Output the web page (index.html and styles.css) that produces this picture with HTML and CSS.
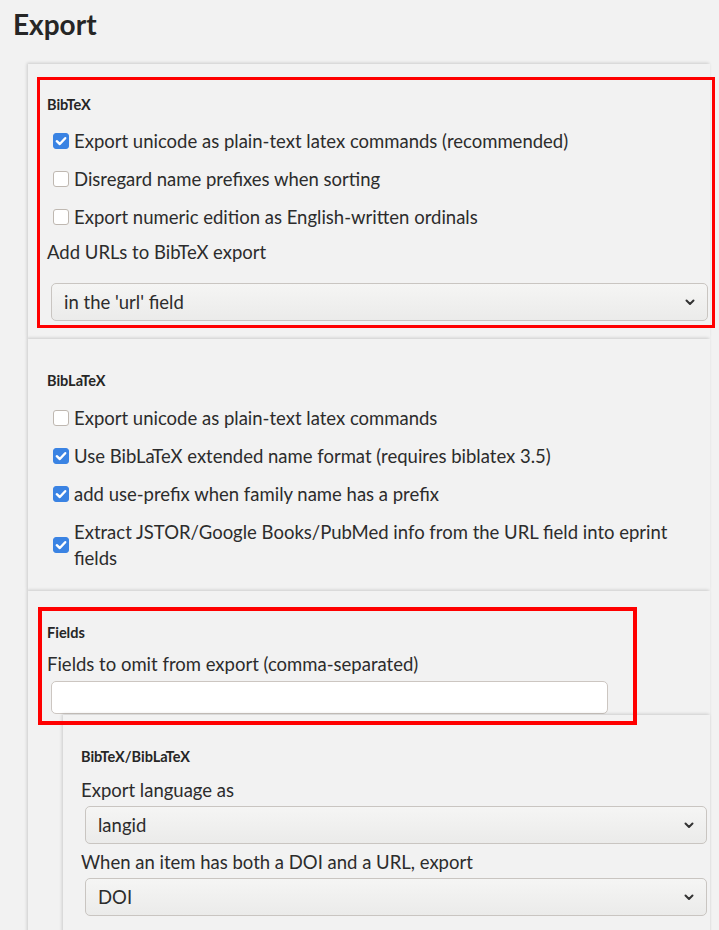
FILE: index.html
```html
<!DOCTYPE html>
<html>
<head>
<meta charset="utf-8">
<link rel="stylesheet" href="styles.css">
</head>
<body>
<h1 class="title">Export</h1>
<div class="groups">
  <div class="section s1">
    <div class="caption">BibTeX</div>
    <div class="row"><span class="cb on"><svg viewBox="0 0 16 16"><path d="M3.8 8.2 L6.8 11 L12.2 5.2"/></svg></span><span class="lbl">Export unicode as plain-text latex commands (recommended)</span></div>
    <div class="row"><span class="cb"></span><span class="lbl">Disregard name prefixes when sorting</span></div>
    <div class="row"><span class="cb"></span><span class="lbl">Export numeric edition as English-written ordinals</span></div>
    <div class="label urls">Add URLs to BibTeX export</div>
    <div class="select big"><span>in the 'url' field</span><svg class="chev" viewBox="0 0 10 7"><path d="M1.5 1.5 L5 5 L8.5 1.5"/></svg></div>
  </div>
  <div class="section s2">
    <div class="caption">BibLaTeX</div>
    <div class="row"><span class="cb"></span><span class="lbl">Export unicode as plain-text latex commands</span></div>
    <div class="row"><span class="cb on"><svg viewBox="0 0 16 16"><path d="M3.8 8.2 L6.8 11 L12.2 5.2"/></svg></span><span class="lbl">Use BibLaTeX extended name format (requires biblatex 3.5)</span></div>
    <div class="row"><span class="cb on"><svg viewBox="0 0 16 16"><path d="M3.8 8.2 L6.8 11 L12.2 5.2"/></svg></span><span class="lbl">add use-prefix when family name has a prefix</span></div>
    <div class="row"><span class="cb on"><svg viewBox="0 0 16 16"><path d="M3.8 8.2 L6.8 11 L12.2 5.2"/></svg></span><span class="lbl">Extract JSTOR/Google Books/PubMed info from the URL field into eprint fields</span></div>
  </div>
  <div class="section s3">
    <div class="caption">Fields</div>
    <div class="label omit">Fields to omit from export (comma-separated)</div>
    <div class="textbox"></div>
    <div class="inner">
      <div class="caption">BibTeX/BibLaTeX</div>
      <div class="label lang">Export language as</div>
      <div class="select small"><span>langid</span><svg class="chev" viewBox="0 0 10 7"><path d="M1.5 1.5 L5 5 L8.5 1.5"/></svg></div>
      <div class="label doi">When an item has both a DOI and a URL, export</div>
      <div class="select small"><span>DOI</span><svg class="chev" viewBox="0 0 10 7"><path d="M1.5 1.5 L5 5 L8.5 1.5"/></svg></div>
    </div>
  </div>
</div>
<div class="highlight hl1"></div>
<div class="highlight hl2"></div>
</body>
</html>
```
FILE: styles.css
```css
html, body {
  margin: 0;
  padding: 0;
  background: #f2f2f2;
}
body {
  font-family: Lato, "Liberation Sans", sans-serif;
  font-size: 18.5px;
  color: #2c2c2c;
  position: relative;
  height: 930px;
  overflow: hidden;
}
.title {
  margin: 0;
  padding: 7px 0 0 13px;
  height: 57px;
  box-sizing: border-box;
  font-size: 28px;
  font-weight: 700;
  line-height: 34px;
  color: #262626;
}
.groups {
  margin-left: 28px;
  margin-right: 9px;
  margin-top: 7px;
}
.section {
  background: #f2f2f2;
  box-shadow: -1px -1px 3px rgba(0, 0, 0, 0.16);
  padding: 31px 2px 0 19px;
  box-sizing: border-box;
  position: relative;
}
.s1 { height: 275px; }
.s2 { height: 252px; padding-top: 32px; }
.s3 { padding-top: 32px; padding-right: 0; }
.caption {
  font-size: 14.5px;
  font-weight: 700;
  line-height: 20px;
  height: 20px;
  color: #262626;
}
.row {
  display: flex;
  align-items: center;
  line-height: 26px;
  margin-top: 12px;
}
.s1 .caption + .row { margin-top: 13px; }
.s2 .caption + .row { margin-top: 14px; }
.cb {
  flex: none;
  width: 14px;
  height: 14px;
  margin-left: 6px;
  margin-right: 5px;
  border: 1px solid #bfb8b1;
  border-radius: 3px;
  background: #ffffff;
  display: flex;
}
.cb.on {
  background: #3a83e3;
  border-color: #3a83e3;
}
.cb svg {
  width: 16px;
  height: 16px;
  margin: -1px;
  fill: none;
  stroke: #ffffff;
  stroke-width: 2.4;
  stroke-linecap: round;
  stroke-linejoin: round;
}
.label {
  line-height: 26px;
}
.urls { margin-top: 9px; }
.omit { margin-top: 8px; }
.select {
  display: flex;
  align-items: center;
  justify-content: space-between;
  box-sizing: border-box;
  margin-left: 4px;
  border: 1px solid #c9c5c1;
  border-radius: 5px;
  background: linear-gradient(#f5f5f4, #ebebea);
  padding: 0 12px 0 12px;
}
.select.big {
  height: 38px;
  margin-top: 18px;
}
.select.small {
  height: 38px;
  margin-top: 3px;
  margin-right: 3px;
}
.select span {
  line-height: 26px;
}
.chev {
  width: 10px;
  height: 7px;
  fill: none;
  stroke: #333333;
  stroke-width: 2;
  stroke-linecap: round;
  stroke-linejoin: round;
}
.textbox {
  margin-top: 4px;
  margin-left: 4px;
  width: 557px;
  height: 33px;
  box-sizing: border-box;
  background: #ffffff;
  border: 1px solid #ccc6c1;
  border-radius: 5px;
}
.inner {
  margin-top: 1px;
  margin-left: 16px;
  background: #f2f2f2;
  box-shadow: -1px -1px 3px rgba(0, 0, 0, 0.16);
  padding: 32px 0 40px 18px;
  position: relative;
}
.lang { margin-top: 10px; }
.doi { margin-top: 5px; }
.highlight {
  position: absolute;
  box-sizing: border-box;
  border-style: solid;
  border-color: #ff0000;
  pointer-events: none;
}
.hl1 {
  left: 37px;
  top: 77px;
  width: 678px;
  height: 251px;
  border-width: 3px;
}
.hl2 {
  left: 38px;
  top: 607px;
  width: 599px;
  height: 118px;
  border-width: 4px;
}
```
